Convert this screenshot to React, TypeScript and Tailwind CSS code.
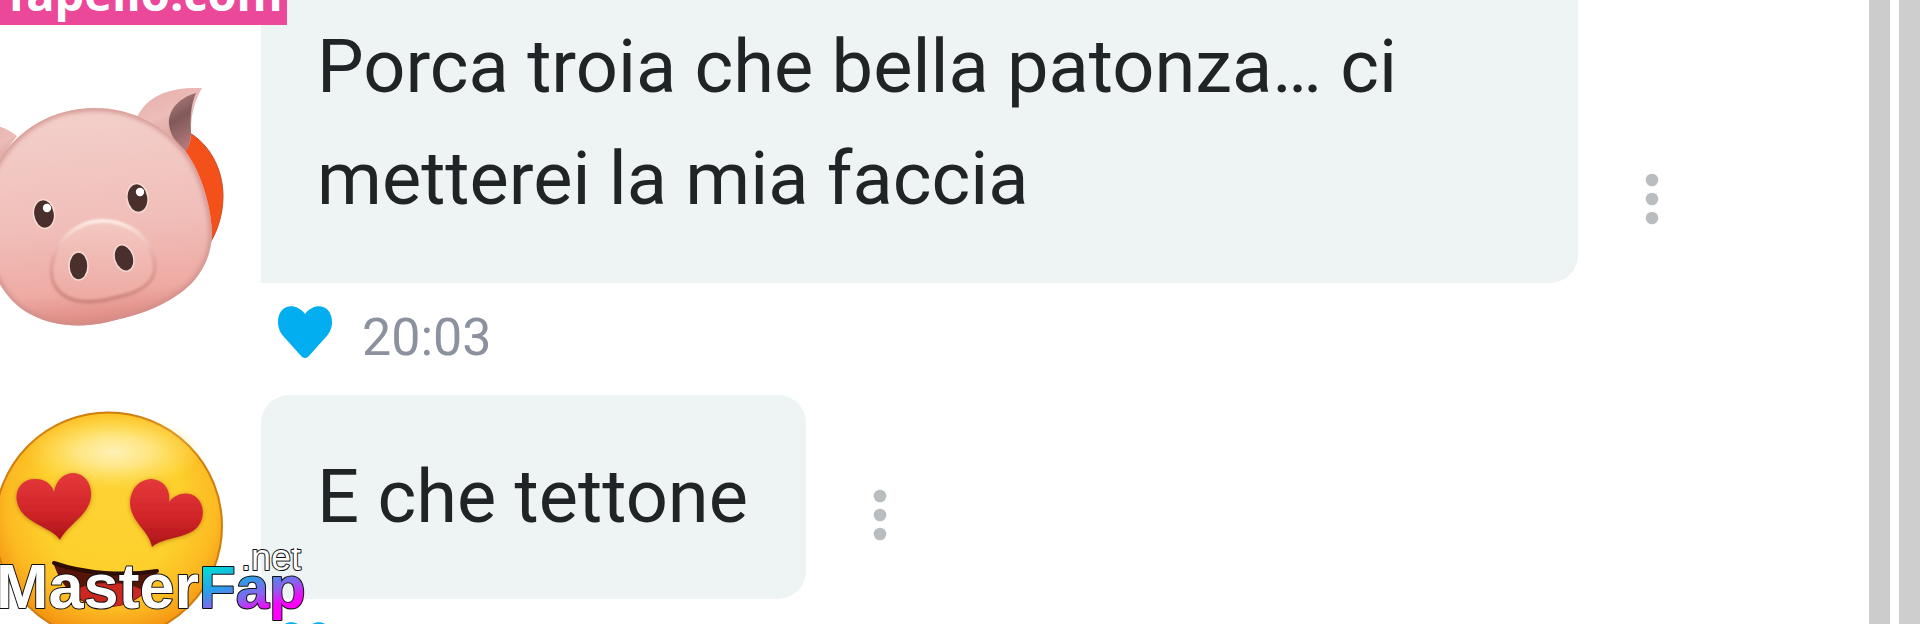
import React from "react";

function PigAvatar() {
  return (
    <svg viewBox="0 80 261 260" className="mt-20 block h-[260px] w-[261px]" role="img" aria-label="Pig avatar">
      <defs>
        <linearGradient id="pigSkin" x1="0" y1="0" x2="0.1" y2="1">
          <stop offset="0" stopColor="#efc8c3" />
          <stop offset="0.12" stopColor="#f3cec9" />
          <stop offset="0.55" stopColor="#f1bfba" />
          <stop offset="0.85" stopColor="#eeaba4" />
          <stop offset="1" stopColor="#dc867e" />
        </linearGradient>
        <linearGradient id="pigEar" x1="0" y1="0" x2="0.4" y2="1">
          <stop offset="0" stopColor="#e6aeaa" />
          <stop offset="0.5" stopColor="#edbdb9" />
          <stop offset="1" stopColor="#d69a97" />
        </linearGradient>
        <linearGradient id="pigEarInner" x1="0" y1="0" x2="0.3" y2="1">
          <stop offset="0" stopColor="#b98582" />
          <stop offset="0.5" stopColor="#80595a" />
          <stop offset="1" stopColor="#b17878" />
        </linearGradient>
        <linearGradient id="pigSnout" x1="0" y1="0" x2="0" y2="1">
          <stop offset="0" stopColor="#f3c9c2" />
          <stop offset="1" stopColor="#eda9a2" />
        </linearGradient>
        <linearGradient id="pigSnoutEdge" x1="0" y1="0" x2="0" y2="1">
          <stop offset="0" stopColor="#fdece6" />
          <stop offset="0.45" stopColor="#e7a7a0" />
          <stop offset="1" stopColor="#cf857e" />
        </linearGradient>
        <filter id="pigSoft" x="-20%" y="-20%" width="140%" height="140%">
          <feGaussianBlur stdDeviation="2.5" />
        </filter>
        <filter id="pigEdgeSoft" x="-20%" y="-20%" width="140%" height="140%">
          <feGaussianBlur stdDeviation="1" />
        </filter>
        <clipPath id="pigHeadClip">
          <path d="M-16 205C-12 158 30 108 95 108C133 108 166 127 186 152C201 172 212 208 212 235C211 258 200 278 183 291C155 312 128 317 108 322C82 328 54 327 30 314C2 299 -19 262 -16 205Z" />
        </clipPath>
      </defs>
      <path d="M188 132C210 144 223 170 223 196C223 213 218 230 210 243L165 190Z" fill="#f4511a" stroke="#c84c22" strokeWidth="1" />
      <path d="M-10 124C0 126 10 130 17 136L-8 170Z" fill="url(#pigEar)" />
      <path d="M137 117C148 94 172 87 202 88C194 102 190 118 191 136C191 142 188 148 184 153Z" fill="url(#pigEar)" />
      <path d="M196 93C178 98 168 111 169 124C170 136 178 145 186 151C190 144 191 137 191 131C190 116 191 105 196 93Z" fill="url(#pigEarInner)" />
      <g clipPath="url(#pigHeadClip)">
        <rect x="-20" y="100" width="240" height="235" fill="url(#pigSkin)" />
        <path d="M-16 205C-12 158 30 108 95 108C133 108 166 127 186 152C201 172 212 208 212 235C211 258 200 278 183 291C155 312 128 317 108 322C82 328 54 327 30 314C2 299 -19 262 -16 205Z" fill="none" stroke="#cf8f8a" strokeWidth="5" filter="url(#pigSoft)" />
      </g>
      <path d="M100 219C121 218 138 229 147 242C154 252 157 266 153 276C147 291 125 296 105 300C88 303 73 303 62 294C51 285 49 272 54 256C60 236 79 220 100 219Z" fill="url(#pigSnout)" />
      <path d="M100 221C121 220 138 230 147 243C154 253 157 266 153 276C147 291 125 296 105 300C88 303 73 303 62 294C51 285 49 272 54 256C60 237 79 222 100 221Z" fill="none" stroke="url(#pigSnoutEdge)" strokeWidth="4" filter="url(#pigEdgeSoft)" />
      <g fill="#4a302c" stroke="#f8dcd5" strokeWidth="1.5">
        <ellipse cx="44" cy="214" rx="10.5" ry="14.5" transform="rotate(-8 44 214)" />
        <ellipse cx="137.5" cy="198" rx="10.5" ry="14.5" transform="rotate(-8 137.5 198)" />
        <ellipse cx="78.5" cy="266" rx="9.5" ry="14" />
        <ellipse cx="124" cy="258" rx="9.5" ry="13.5" transform="rotate(-18 124 258)" />
      </g>
      <circle cx="47" cy="208" r="4.2" fill="#fff" />
      <circle cx="140" cy="192" r="4.2" fill="#fff" />
    </svg>
  );
}

function HeartEyesAvatar() {
  return (
    <svg viewBox="0 407 261 240" className="mt-3 block h-[240px] w-[261px]" role="img" aria-label="Heart eyes avatar">
      <defs>
        <radialGradient id="faceFill" gradientUnits="userSpaceOnUse" cx="112" cy="505" r="142">
          <stop offset="0" stopColor="#fdd233" />
          <stop offset="0.5" stopColor="#fdd02c" />
          <stop offset="0.74" stopColor="#fcba22" />
          <stop offset="1" stopColor="#f1840c" />
        </radialGradient>
        <radialGradient id="faceShine">
          <stop offset="0" stopColor="#fff1b8" />
          <stop offset="0.4" stopColor="#ffea94" stopOpacity="0.85" />
          <stop offset="1" stopColor="#ffe469" stopOpacity="0" />
        </radialGradient>
        <linearGradient id="eyeFill" x1="0" y1="0" x2="0" y2="1">
          <stop offset="0" stopColor="#e5393b" />
          <stop offset="0.6" stopColor="#cf2428" />
          <stop offset="1" stopColor="#a91519" />
        </linearGradient>
        <filter id="eyeShade" x="-20%" y="-20%" width="140%" height="140%">
          <feDropShadow dx="0" dy="1" stdDeviation="2" floodColor="#a35b00" floodOpacity="0.6" />
        </filter>
      </defs>
      <circle cx="108.5" cy="526" r="113.5" fill="url(#faceFill)" stroke="#cf7d0c" strokeWidth="2" />
      <ellipse cx="114" cy="452" rx="88" ry="38" fill="url(#faceShine)" />
      <g fill="url(#eyeFill)" filter="url(#eyeShade)">
        <path d="M60 540C51 526 22 524 17 502C14 488 24 479 34 479C44 478 52 484 54 492C56 480 64 473 74 473C85 474 92 484 91 496C90 515 68 524 60 540Z" />
        <path d="M152 547C149 530 130 522 130 502C131 488 140 479 152 479C164 480 171 490 169 502C176 493 188 491 196 497C204 504 205 516 199 525C190 539 165 536 152 547Z" />
      </g>
      <path d="M53 562C85 573 125 575 158 570C152 592 133 607 108 607C80 607 62 590 53 562Z" fill="#571408" />
      <path d="M72 592C88 580 130 580 145 592C122 612 92 612 72 592Z" fill="#c8281f" />
      <path d="M54 563C85 574 125 576 157 571" fill="none" stroke="#2b0d04" strokeWidth="4" strokeLinecap="round" />
    </svg>
  );
}

function Heart() {
  return (
    <svg viewBox="0 0 56 54" className="block h-[54px] w-14" aria-hidden="true">
      <path d="M28 9C38-4 55 0 55 17C55 24 52 29 48 33L31 52Q28 54 25 52L8 33C4 29 1 24 1 17C1 0 18-4 28 9Z" fill="#02aeef" />
    </svg>
  );
}

function MenuButton() {
  return (
    <button type="button" aria-label="Message options" className="mb-[55px] ml-12 shrink-0 px-[19px]">
      <svg viewBox="0 0 14 58" className="block h-[58px] w-3.5" fill="#b9bdbf">
        <circle cx="7" cy="10" r="6.3" />
        <circle cx="7" cy="29" r="6.3" />
        <circle cx="7" cy="48" r="6.3" />
      </svg>
    </button>
  );
}

function Logo() {
  return (
    <svg
      viewBox="0 0 310 76"
      className="absolute bottom-0 left-0 block h-[76px] w-[310px] font-['Liberation_Sans',sans-serif]"
      role="img"
      aria-label="MasterFap.net"
    >
      <defs>
        <linearGradient id="logoFill" gradientUnits="userSpaceOnUse" x1="225" y1="14" x2="245" y2="74">
          <stop offset="0" stopColor="#00dcd2" />
          <stop offset="0.35" stopColor="#28a0e8" />
          <stop offset="0.65" stopColor="#8a62ee" />
          <stop offset="0.9" stopColor="#f208fb" />
          <stop offset="1" stopColor="#ff00ff" />
        </linearGradient>
      </defs>
      <g stroke="#111111" strokeWidth="2" strokeLinejoin="round" className="[paint-order:stroke_fill]">
        <text x="-4" y="60" className="text-[63px] font-bold" fill="#ffffff">
          Master<tspan fill="url(#logoFill)" className="text-[60px]">Fap</tspan>
        </text>
        <text x="301" y="22" textAnchor="end" className="text-[36px]" fill="#ffffff">
          .net
        </text>
      </g>
    </svg>
  );
}

function Message({
  avatar,
  bubbleClass,
  time,
  children,
}: {
  avatar: React.ReactNode;
  bubbleClass: string;
  time: string;
  children: React.ReactNode;
}) {
  return (
    <article className="flex">
      <div className="w-[261px] shrink-0">{avatar}</div>
      <div className="min-w-0 flex-1">
        <div className="flex items-end">
          <p className={`bg-[#eef3f4] pr-[58px] pl-14 text-[74px] leading-[112px] text-[#202427] ${bubbleClass}`}>{children}</p>
          <MenuButton />
        </div>
        <footer className="flex h-28 items-start pt-[22px] pl-4">
          <button type="button" aria-label="Like">
            <Heart />
          </button>
          <time className="ml-[29px] text-[52px] leading-[65px] text-[#8b919f]">{time}</time>
        </footer>
      </div>
    </article>
  );
}

export default function App() {
  return (
    <div className="relative flex h-screen overflow-hidden bg-white font-['Roboto',sans-serif]">
      <main className="min-w-0 flex-1">
        <Message avatar={<PigAvatar />} time="20:03" bubbleClass="w-full max-w-[1317px] rounded-br-[28px] pt-[11px] pb-12">
          Porca troia che bella patonza… ci metterei la mia faccia
        </Message>
        <Message avatar={<HeartEyesAvatar />} time="20:03" bubbleClass="rounded-[28px] py-[46px]">
          E che tettone
        </Message>
      </main>
      <aside className="flex shrink-0 gap-[9px]" aria-hidden="true">
        <div className="w-[21px] bg-[#cccccc]" />
        <div className="w-[21px] bg-[#cecece]" />
      </aside>

      <div className="absolute top-0 left-0 flex h-[25px] items-end overflow-hidden bg-[#ec4899] pr-1 pl-2 font-['Open_Sans',sans-serif] text-[47px] leading-[64px] font-bold text-white">
        fapello.com
      </div>
      <Logo />
    </div>
  );
}
